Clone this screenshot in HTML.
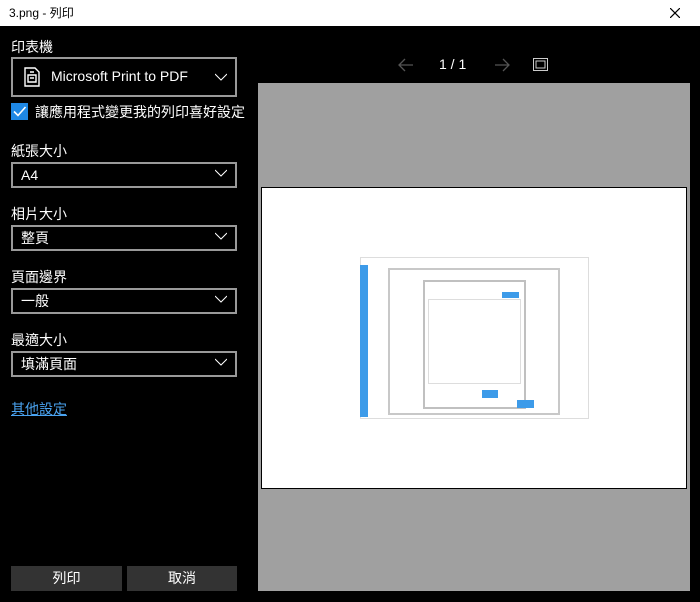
<!DOCTYPE html><html><head><meta charset="utf-8"><style>
body{margin:0;width:700px;height:602px;background:#000;position:relative;overflow:hidden;font-family:"Liberation Sans","Noto Sans CJK TC",sans-serif;color:#fff}
.a{position:absolute}
.lbl{position:absolute;left:11px;font-size:14px}
.dd{position:absolute;left:11px;height:22px;border:2px solid #999;font-size:14px;line-height:22px;padding-left:8px;box-sizing:content-box;width:214px}
.chev{position:absolute;right:8px;top:5px;width:12px;height:8px}
.btn{position:absolute;top:566px;height:25px;background:#333;font-size:14px;line-height:25px;text-align:center}
</style></head><body>
<div class="a" style="left:0;top:0;width:700px;height:26px;background:#fff;color:#000;font-size:12px;line-height:26px"><span style="margin-left:9px">3.png - 列印</span>
<svg class="a" style="right:20px;top:8px" width="10" height="10"><path d="M0 0L10 10M10 0L0 10" stroke="#000" stroke-width="1.2"/></svg></div>
<div class="lbl" style="top:37px">印表機</div>
<div class="a" style="left:11px;top:57px;width:222px;height:36px;border:2px solid #999">
<svg class="a" style="left:10px;top:8px" width="18" height="20"><path d="M2 1H12L16 5V19H2Z M5 8H13V15H5Z M7 5H11 M7 11H11" stroke="#fff" stroke-width="1.4" fill="none"/></svg>
<span class="a" style="left:38px;top:9px;font-size:14px">Microsoft Print to PDF</span>
<svg class="chev" style="top:14px" width="12" height="8"><path d="M0 1L6 7L12 1" stroke="#fff" fill="none"/></svg></div>
<div class="a" style="left:11px;top:103px;width:17px;height:17px;background:#1e88e5"><svg width="17" height="17"><path d="M3 8.5L7 12.5L14.5 4" stroke="#fff" stroke-width="1.6" fill="none"/></svg></div>
<div class="a" style="left:35px;top:102px;font-size:14px">讓應用程式變更我的列印喜好設定</div>
<div class="lbl" style="top:141px">紙張大小</div>
<div class="dd" style="top:162px">A4<svg class="chev" width="12" height="8"><path d="M0 1L6 7L12 1" stroke="#fff" fill="none"/></svg></div>
<div class="lbl" style="top:204px">相片大小</div>
<div class="dd" style="top:225px">整頁<svg class="chev" width="12" height="8"><path d="M0 1L6 7L12 1" stroke="#fff" fill="none"/></svg></div>
<div class="lbl" style="top:267px">頁面邊界</div>
<div class="dd" style="top:288px">一般<svg class="chev" width="12" height="8"><path d="M0 1L6 7L12 1" stroke="#fff" fill="none"/></svg></div>
<div class="lbl" style="top:330px">最適大小</div>
<div class="dd" style="top:351px">填滿頁面<svg class="chev" width="12" height="8"><path d="M0 1L6 7L12 1" stroke="#fff" fill="none"/></svg></div>
<div class="lbl" style="top:399px;color:#4aa3f0;text-decoration:underline">其他設定</div>
<div class="btn" style="left:11px;width:111px">列印</div>
<div class="btn" style="left:127px;width:110px">取消</div>
<svg class="a" style="left:398px;top:58px" width="16" height="14"><path d="M15 7H1M7 1L1 7L7 13" stroke="#555" stroke-width="1.3" fill="none"/></svg>
<div class="a" style="left:439px;top:56px;font-size:14px">1 / 1</div>
<svg class="a" style="left:494px;top:58px" width="16" height="14"><path d="M1 7H15M9 1L15 7L9 13" stroke="#555" stroke-width="1.3" fill="none"/></svg>
<svg class="a" style="left:533px;top:58px" width="15" height="13"><rect x="0.5" y="0.5" width="14" height="12" stroke="#ccc" fill="none"/><rect x="3" y="3" width="9" height="7" stroke="#ccc" fill="none"/></svg>
<div class="a" style="left:258px;top:83px;width:432px;height:508px;background:#a0a0a0"></div>
<div class="a" style="left:261px;top:187px;width:424px;height:300px;background:#fff;border:1px solid #000"></div>
<div class="a" style="left:360px;top:257px;width:227px;height:160px;background:#fff;border:1px solid #ddd"></div>
<div class="a" style="left:360px;top:265px;width:8px;height:152px;background:#3d9be9"></div>
<div class="a" style="left:388px;top:268px;width:168px;height:143px;border:2px solid #c8c8c8;background:#fff"></div>
<div class="a" style="left:423px;top:280px;width:99px;height:125px;border:2px solid #c0c0c0;background:#fff"></div>
<div class="a" style="left:428px;top:299px;width:91px;height:83px;border:1px solid #ddd"></div>
<div class="a" style="left:502px;top:292px;width:17px;height:6px;background:#3d9be9"></div>
<div class="a" style="left:482px;top:390px;width:16px;height:8px;background:#3d9be9"></div>
<div class="a" style="left:517px;top:400px;width:17px;height:8px;background:#3d9be9"></div>
</body></html>
